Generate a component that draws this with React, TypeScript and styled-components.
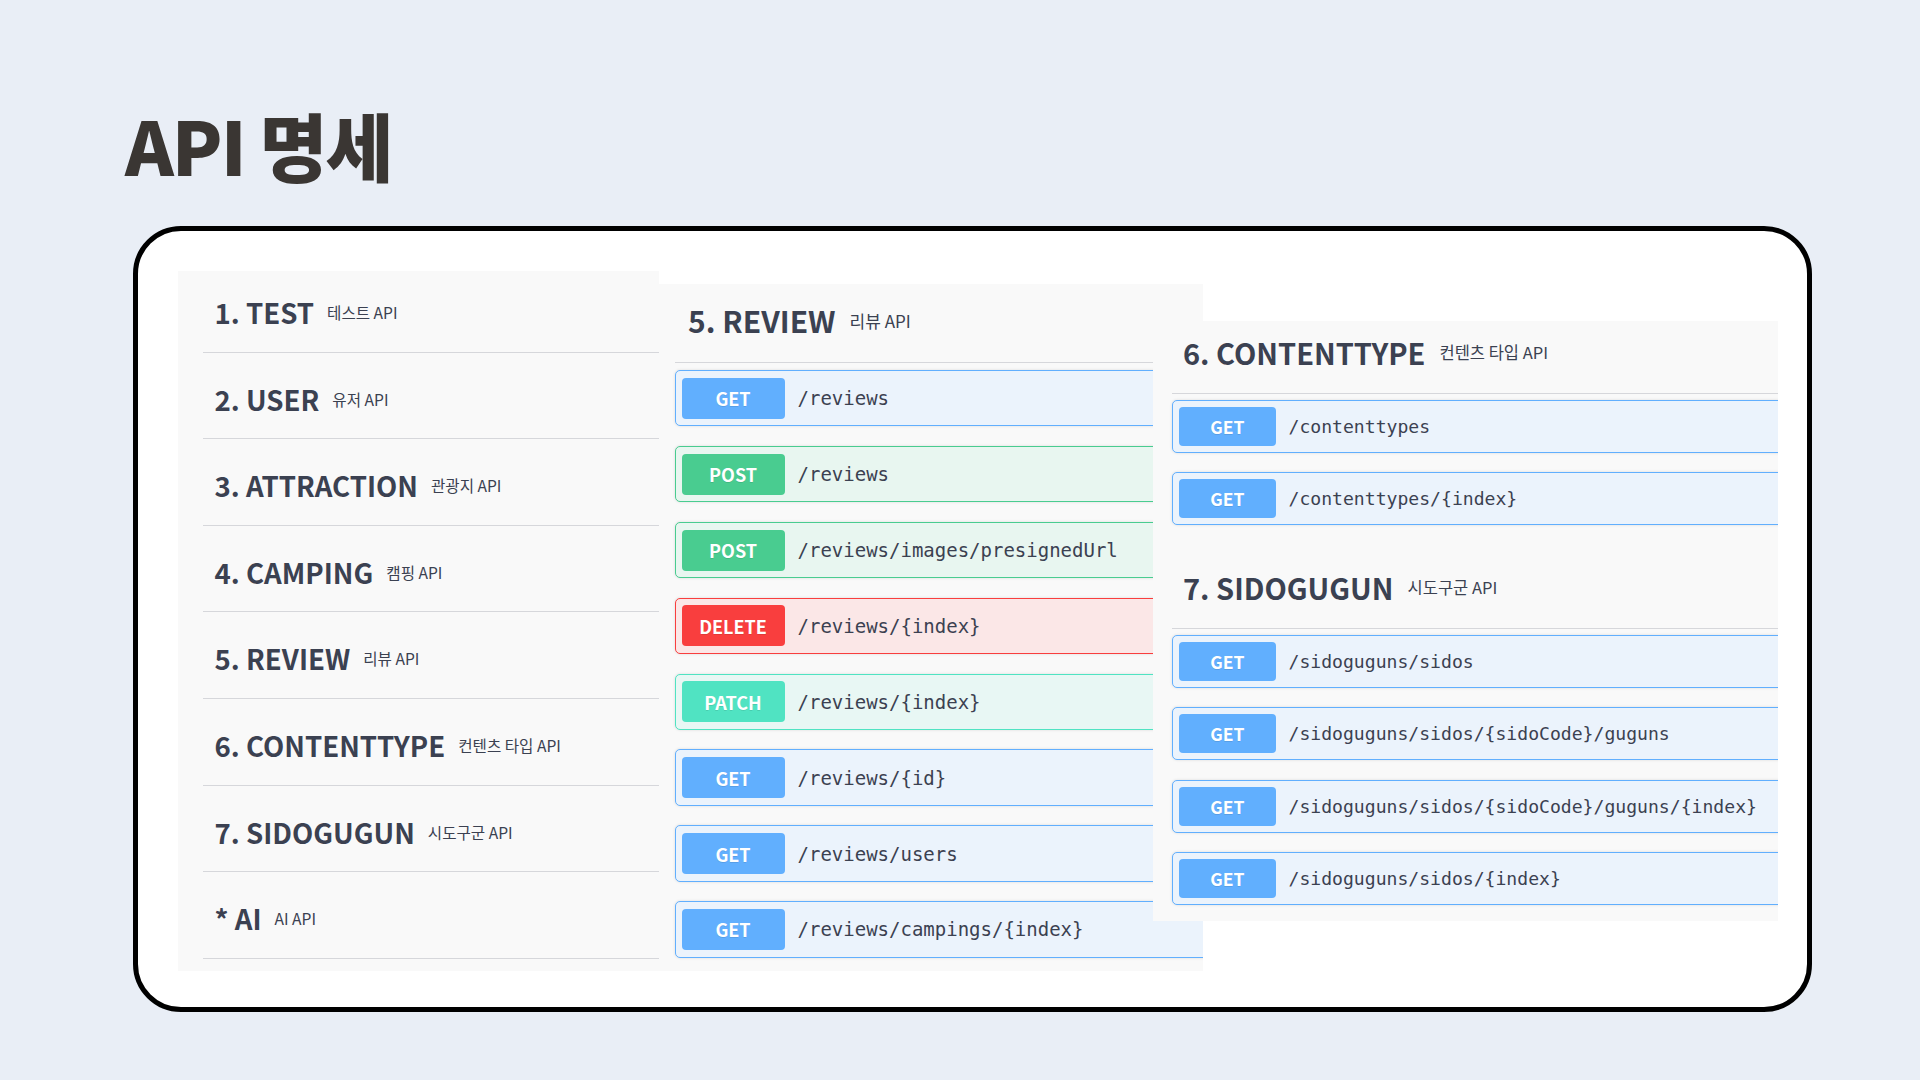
import React from "react";
import styled, { createGlobalStyle } from "styled-components";

const GlobalStyle = createGlobalStyle`
  html, body {
    margin: 0;
    padding: 0;
    background: #e9eef6;
  }
  body {
    font-family: "Noto Sans CJK KR", "Noto Sans", sans-serif;
  }
  #root {
    min-height: 100vh;
  }
`;

const Page = styled.div`
  width: 1920px;
  height: 1080px;
  box-sizing: border-box;
  padding-top: 106px;
  display: flex;
  flex-direction: column;
  background: #e9eef6;
  overflow: hidden;
`;

const SlideTitle = styled.h1`
  margin: 0 0 0 125px;
  height: 75px;
  font-family: "Noto Sans CJK KR", sans-serif;
  font-weight: 800;
  font-size: 74px;
  line-height: 75px;
  color: #3a3633;
  letter-spacing: -2px;
`;

const Card = styled.div`
  margin: 45px 0 0 133px;
  box-sizing: border-box;
  width: 1679px;
  height: 786px;
  border: 5px solid #000;
  border-radius: 48px;
  background: #fff;
  padding: 39.6px 0 0 39.5px;
  display: flex;
  align-items: flex-start;
`;

const TagPanel = styled.section`
  position: relative;
  box-sizing: border-box;
  width: 481.5px;
  height: 700.4px;
  background: #f9f9f9;
  padding-left: 25px;
  display: flex;
  flex-direction: column;
  overflow: hidden;
`;

const TagRow = styled.div`
  box-sizing: border-box;
  height: 86.6px;
  padding: 6.4px 0 0 12px;
  border-bottom: 1.5px solid #d6d7db;
  display: flex;
  align-items: center;
  &:first-child {
    height: 82px;
    padding-top: 1.8px;
  }
`;

const TagName = styled.span<{ $size?: number }>`
  font-family: "Noto Sans CJK KR", sans-serif;
  font-weight: 700;
  font-size: ${(p) => p.$size ?? 30}px;
  color: #3b4151;
  white-space: nowrap;
`;

const TagDesc = styled.small<{ $size?: number; $gap?: number }>`
  margin-left: ${(p) => p.$gap ?? 14}px;
  font-family: "Noto Sans CJK KR", sans-serif;
  font-weight: 400;
  font-size: ${(p) => p.$size ?? 17}px;
  color: #3b4151;
  white-space: nowrap;
`;

const OpsPanel = styled.section<{
  $w: number;
  $h: number;
  $top: number;
  $shift?: number;
}>`
  position: relative;
  box-sizing: border-box;
  flex: none;
  width: ${(p) => p.$w}px;
  height: ${(p) => p.$h}px;
  margin-top: ${(p) => p.$top}px;
  margin-left: ${(p) => p.$shift ?? 0}px;
  background: #f9f9f9;
  overflow: hidden;
`;

const Section = styled.div<{ $gap?: number }>`
  margin-top: ${(p) => p.$gap ?? 0}px;
`;

const SectionHead = styled.div<{ $compact?: boolean }>`
  box-sizing: border-box;
  margin-left: ${(p) => (p.$compact ? 19 : 16)}px;
  padding-left: ${(p) => (p.$compact ? 11 : 13)}px;
  height: ${(p) => (p.$compact ? 73 : 79.5)}px;
  padding-bottom: ${(p) => (p.$compact ? 10 : 6)}px;
  border-bottom: 1.5px solid #d6d7db;
  display: flex;
  align-items: center;
`;

const OpList = styled.div<{ $compact?: boolean }>`
  margin: ${(p) => (p.$compact ? "6px 0 0 19px" : "6.5px 0 0 16px")};
  display: flex;
  flex-direction: column;
  gap: ${(p) => (p.$compact ? 19.3 : 19.4)}px;
`;

type Method = "GET" | "POST" | "DELETE" | "PATCH";

const methodColors: Record<Method, { main: string; tint: string }> = {
  GET: { main: "#61affe", tint: "#ebf3fc" },
  POST: { main: "#49cc90", tint: "#e8f6f0" },
  DELETE: { main: "#f93e3e", tint: "#fbe7e7" },
  PATCH: { main: "#50e3c2", tint: "#e8f7f4" },
};

const OpRow = styled.div<{ $method: Method; $compact?: boolean }>`
  box-sizing: border-box;
  flex: none;
  width: 720px;
  height: ${(p) => (p.$compact ? 53 : 56.5)}px;
  padding-left: 5.5px;
  border: 1.5px solid ${(p) => methodColors[p.$method].main};
  border-radius: 5px;
  background: ${(p) => methodColors[p.$method].tint};
  box-shadow: 0 0 3px rgba(0, 0, 0, 0.12);
  display: flex;
  align-items: center;
`;

const MethodBadge = styled.span<{ $method: Method; $compact?: boolean }>`
  flex: none;
  width: ${(p) => (p.$compact ? 97.5 : 103)}px;
  height: ${(p) => (p.$compact ? 39 : 41)}px;
  border-radius: 4px;
  background: ${(p) => methodColors[p.$method].main};
  color: #fff;
  font-family: "Noto Sans CJK KR", sans-serif;
  font-weight: 700;
  font-size: ${(p) => (p.$compact ? 17.5 : 18)}px;
  text-shadow: 0 1px 0 rgba(0, 0, 0, 0.1);
  display: flex;
  align-items: center;
  justify-content: center;
`;

const OpPath = styled.span<{ $compact?: boolean }>`
  margin-left: ${(p) => (p.$compact ? 12.5 : 13)}px;
  font-family: "DejaVu Sans Mono", "Liberation Mono", monospace;
  font-size: ${(p) => (p.$compact ? 18.1 : 19)}px;
  color: #3b4151;
  white-space: nowrap;
`;

const tags: [string, string][] = [
  ["1. TEST", "테스트 API"],
  ["2. USER", "유저 API"],
  ["3. ATTRACTION", "관광지 API"],
  ["4. CAMPING", "캠핑 API"],
  ["5. REVIEW", "리뷰 API"],
  ["6. CONTENTTYPE", "컨텐츠 타입 API"],
  ["7. SIDOGUGUN", "시도구군 API"],
  ["* AI", "AI API"],
];

const reviewOps: [Method, string][] = [
  ["GET", "/reviews"],
  ["POST", "/reviews"],
  ["POST", "/reviews/images/presignedUrl"],
  ["DELETE", "/reviews/{index}"],
  ["PATCH", "/reviews/{index}"],
  ["GET", "/reviews/{id}"],
  ["GET", "/reviews/users"],
  ["GET", "/reviews/campings/{index}"],
];

const contentOps: [Method, string][] = [
  ["GET", "/contenttypes"],
  ["GET", "/contenttypes/{index}"],
];

const sidoOps: [Method, string][] = [
  ["GET", "/sidoguguns/sidos"],
  ["GET", "/sidoguguns/sidos/{sidoCode}/guguns"],
  ["GET", "/sidoguguns/sidos/{sidoCode}/guguns/{index}"],
  ["GET", "/sidoguguns/sidos/{index}"],
];

function Ops({ ops, compact }: { ops: [Method, string][]; compact?: boolean }) {
  return (
    <OpList $compact={compact}>
      {ops.map(([m, path], i) => (
        <OpRow key={i} $method={m} $compact={compact}>
          <MethodBadge $method={m} $compact={compact}>
            {m}
          </MethodBadge>
          <OpPath $compact={compact}>{path}</OpPath>
        </OpRow>
      ))}
    </OpList>
  );
}

export default function App() {
  return (
    <>
      <GlobalStyle />
      <Page>
        <SlideTitle>API 명세</SlideTitle>
        <Card>
          <TagPanel>
            {tags.map(([name, desc]) => (
              <TagRow key={name}>
                <TagName $size={27.6}>{name}</TagName>
                <TagDesc $size={15.6} $gap={13}>
                  {desc}
                </TagDesc>
              </TagRow>
            ))}
          </TagPanel>

          <OpsPanel $w={544} $h={687} $top={13.4}>
            <Section>
              <SectionHead>
                <TagName>5. REVIEW</TagName>
                <TagDesc>리뷰 API</TagDesc>
              </SectionHead>
              <Ops ops={reviewOps} />
            </Section>
          </OpsPanel>

          <OpsPanel $w={625} $h={600} $top={50.4} $shift={-50}>
            <Section>
              <SectionHead $compact>
                <TagName $size={29}>6. CONTENTTYPE</TagName>
                <TagDesc $size={16.5}>컨텐츠 타입 API</TagDesc>
              </SectionHead>
              <Ops ops={contentOps} compact />
            </Section>
            <Section $gap={30.7}>
              <SectionHead $compact>
                <TagName $size={29}>7. SIDOGUGUN</TagName>
                <TagDesc $size={16.5}>시도구군 API</TagDesc>
              </SectionHead>
              <Ops ops={sidoOps} compact />
            </Section>
          </OpsPanel>
        </Card>
      </Page>
    </>
  );
}
